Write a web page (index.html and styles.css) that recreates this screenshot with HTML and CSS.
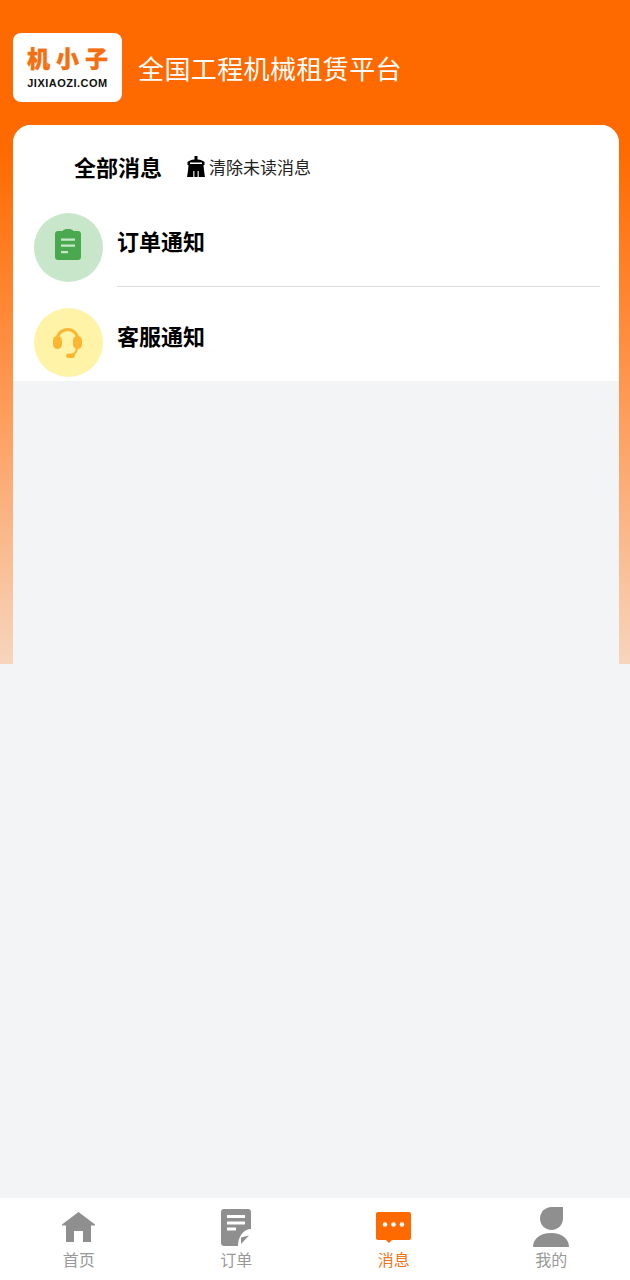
FILE: index.html

```html
<!DOCTYPE html>
<html lang="zh-CN">
<head>
  <meta charset="UTF-8">
  <title>消息</title>
  <link rel="stylesheet" href="styles.css">
</head>
<body>

  <div class="page">
    <div class="header">
      <div class="logo">
        <div class="logo-name">机小子</div>
        <div class="logo-url">JIXIAOZI.COM</div>
      </div>
      <div class="slogan">全国工程机械租赁平台</div>
    </div>

    <div class="content">
      <div class="card">
        <div class="card-head">
          <div class="card-title">全部消息</div>
          <div class="clear">
            <svg class="clear-icon" viewBox="0 0 18 21">
              <path d="M7.500 0h3v3.500c3.500.3 6 1.300 7 2.500v3H.5V6c1-1.200 3.500-2.200 7-2.500z" fill="#000"/>
              <path d="M1.500 9h15c.3 3.500.8 8 1.500 12H0c.8-4 1.300-8.500 1.500-12z" fill="#000"/>
              <path d="M3 6.500h12v1.500H3zM6.300 15h1.100v6H6.300zM10.600 15h1.100v6h-1.100z" fill="#fff"/>
            </svg>
            <span>清除未读消息</span>
          </div>
        </div>

        <div class="item">
          <div class="avatar avatar-green">
            <svg class="icon-order" viewBox="0 0 26 31">
              <path d="M3 2h4.500c1-1.500 2.800-2 5.500-2s4.500.5 5.500 2H23c1.700 0 3 1.300 3 3v23c0 1.700-1.300 3-3 3H3c-1.700 0-3-1.300-3-3V5c0-1.700 1.300-3 3-3z" fill="#4aa84f"/>
              <path d="M6 9.500h14v2.200H6zM6 15.500h14v2.200H6zM6 22h7v2.200H6z" fill="#c8e6c9"/>
            </svg>
          </div>
          <div class="item-title item-line">订单通知</div>
        </div>

        <div class="item">
          <div class="avatar avatar-yellow">
            <svg class="icon-service" viewBox="0 0 29 30">
              <path d="M4 13C4 6 8.500 1.500 14.500 1.500S25 6 25 13" fill="none" stroke="#fbb731" stroke-width="3"/>
              <rect x="0" y="8" width="9" height="13" rx="4.500" fill="#fbb731"/>
              <rect x="20" y="8" width="9" height="13" rx="4.500" fill="#fbb731"/>
              <path d="M24 20c0 3.500-2 6-6 7" fill="none" stroke="#fbb731" stroke-width="2"/>
              <rect x="13" y="25.500" width="9" height="4.500" rx="2.250" fill="#fbb731"/>
            </svg>
          </div>
          <div class="item-title">客服通知</div>
        </div>
      </div>
    </div>

    <div class="spacer"></div>

    <div class="tabbar">
      <div class="tab">
        <div class="tab-icon">
          <svg class="icon-home" viewBox="0 0 33 30">
            <path d="M16.500 0L33 12.500V13.500H29V30H21V19H12V30H4V13.500H0V12.500z" fill="#8f8f8f"/>
          </svg>
        </div>
        <span>首页</span>
      </div>
      <div class="tab">
        <div class="tab-icon">
          <svg class="icon-doc" viewBox="0 0 30 37">
            <path d="M3 0h24c1.600 0 3 1.300 3 3v17c-7 0-13 7-13 17H3c-1.700 0-3-1.300-3-3V3C0 1.300 1.400 0 3 0z" fill="#8f8f8f"/>
            <path d="M6 6h18v3H6zM6 12.500h18v3H6zM6 18.500h9v3H6z" fill="#fff"/>
            <path d="M20 35V28.500l8-2z" fill="#8f8f8f"/>
          </svg>
        </div>
        <span>订单</span>
      </div>
      <div class="tab tab-active">
        <div class="tab-icon">
          <svg class="icon-msg" viewBox="0 0 35 31">
            <path d="M2 0h31c1.100 0 2 .9 2 2v24c0 1.100-.9 2-2 2H16l-3 3-3-3H2c-1.100 0-2-.9-2-2V2C0 .9.900 0 2 0z" fill="#ff6a00"/>
            <circle cx="9" cy="12.500" r="2.300" fill="#fff"/>
            <circle cx="17.500" cy="12.500" r="2.300" fill="#fff"/>
            <circle cx="26" cy="12.500" r="2.300" fill="#fff"/>
          </svg>
        </div>
        <span>消息</span>
      </div>
      <div class="tab">
        <div class="tab-icon">
          <svg class="icon-user" viewBox="0 0 36 40">
            <path d="M30 0v11.500C30 18 24.800 23 18.500 23S7 18 7 11.500C7 5 12.200 0 18.500 0z" fill="#8f8f8f"/>
            <path d="M0 40c0-8 7-14 18-14s18 6 18 14z" fill="#8f8f8f"/>
          </svg>
        </div>
        <span>我的</span>
      </div>
    </div>
  </div>

</body>
</html>
```

FILE: styles.css

```css
* {
  box-sizing: border-box;
}

body {
  margin: 0;
  font-family: "Noto Sans CJK SC", "Noto Sans", sans-serif;
  background-color: #f3f4f6;
}

.page {
  display: flex;
  flex-direction: column;
  height: 1280px;
  background: linear-gradient(to bottom, #ff6a00 0, #ff6a00 150px, #ff9147 360px, #f7d5bd 664px) no-repeat;
  background-size: 100% 664px;
}

.header {
  display: flex;
  align-items: center;
  gap: 16px;
  height: 125px;
  padding: 10px 13px 0;
}

.logo {
  display: flex;
  flex-direction: column;
  align-items: center;
  justify-content: center;
  width: 109px;
  height: 69px;
  background-color: #fff;
  border-radius: 8px;
}

.logo-name {
  font-size: 23px;
  line-height: 30px;
  font-weight: 900;
  letter-spacing: 6px;
  margin: -4px -6px 4px 0;
  color: #f46f12;
  -webkit-text-stroke: 0.4px #f46f12;
}

.logo-url {
  font-family: "Liberation Sans", sans-serif;
  font-size: 11px;
  line-height: 14px;
  font-weight: bold;
  letter-spacing: 0.5px;
  color: #111;
}

.slogan {
  font-size: 26px;
  letter-spacing: 0.4px;
  color: #fff;
}

.content {
  height: 539px;
  margin: 0 11px 0 13px;
  background-color: #f3f4f6;
  border-radius: 18px 18px 0 0;
}

.card {
  height: 256px;
  padding: 0 19px 0 21px;
  background-color: #fff;
  border-radius: 18px 18px 0 0;
}

.card-head {
  display: flex;
  align-items: center;
  height: 84px;
  padding: 0 0 2px 40px;
}

.card-title {
  width: 113px;
  font-size: 22px;
  font-weight: bold;
  color: #000;
}

.clear {
  display: flex;
  align-items: center;
  gap: 4px;
  font-size: 17px;
  color: #222;
}

.clear-icon {
  width: 18px;
  height: 21px;
}

.item {
  display: flex;
  align-items: flex-start;
  gap: 14px;
  height: 95px;
  padding-top: 4px;
}

.avatar {
  display: flex;
  align-items: center;
  justify-content: center;
  flex-shrink: 0;
  width: 69px;
  height: 69px;
  border-radius: 50%;
}

.avatar-green {
  background-color: #c8e6c9;
}

.avatar-yellow {
  background-color: #fff3a8;
}

.icon-order {
  width: 26px;
  height: 31px;
  margin: 0 2px 6px 0;
}

.icon-service {
  width: 29px;
  height: 30px;
  margin-right: 2px;
}

.item-title {
  flex: 1;
  height: 74px;
  padding-top: 10px;
  font-size: 22px;
  line-height: 34px;
  font-weight: bold;
  color: #000;
}

.item-line {
  border-bottom: 1px solid #dcdcdc;
}

.spacer {
  flex: 1;
}

.tabbar {
  display: flex;
  height: 82px;
  background-color: #fff;
}

.tab {
  flex: 1;
  display: flex;
  flex-direction: column;
  align-items: center;
  justify-content: flex-end;
  padding-bottom: 10px;
  font-size: 16px;
  line-height: 22px;
  color: #999;
}

.tab-active {
  color: #f0761e;
}

.tab-icon {
  display: flex;
  align-items: center;
  justify-content: center;
  height: 40px;
  margin-bottom: 1px;
}

.icon-home {
  width: 33px;
  height: 30px;
}

.icon-doc {
  width: 30px;
  height: 37px;
}

.icon-msg {
  width: 35px;
  height: 31px;
}

.icon-user {
  width: 36px;
  height: 40px;
}
```
